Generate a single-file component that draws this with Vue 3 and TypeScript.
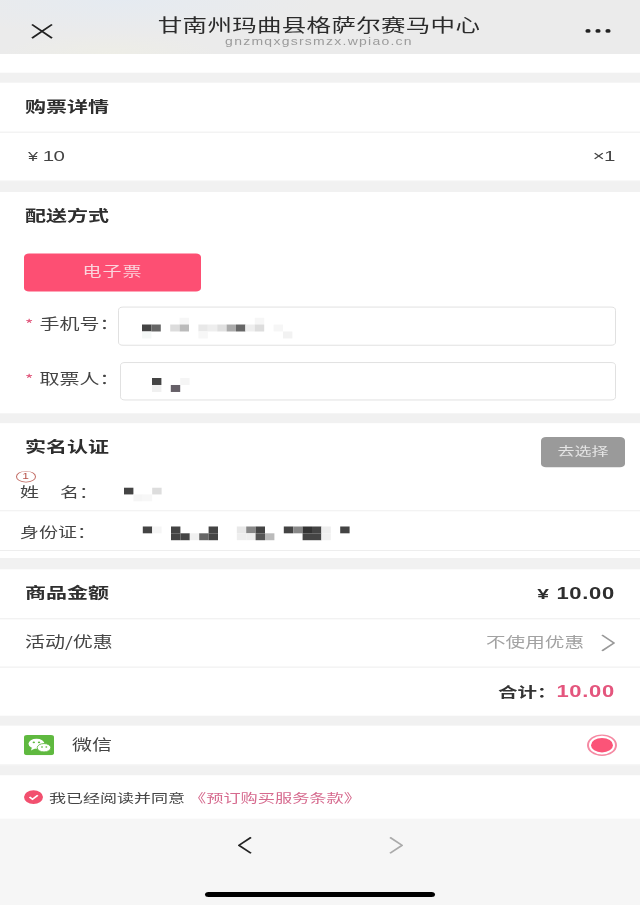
<script setup lang="ts">
type Cell = [number, number, string]

const CELL_W = 9.4
const CELL_H = 9.7

const phoneCells: Cell[] = [
  [4, 0, '#f6f6f6'], [12, 0, '#f6f6f6'],
  [0, 1, '#444'], [1, 1, '#666'], [3, 1, '#dcdcdc'], [4, 1, '#bbb'], [6, 1, '#e8e8e8'], [7, 1, '#eee'],
  [8, 1, '#e0e0e0'], [9, 1, '#aaa'], [10, 1, '#666'], [11, 1, '#eee'], [12, 1, '#ddd'], [14, 1, '#f6f6f6'],
  [0, 2, '#f5f8f7'], [6, 2, '#f7f7f7'], [15, 2, '#f2f2f2'],
]
const ticketCells: Cell[] = [
  [0, 0, '#444'], [3, 0, '#f5f5f5'],
  [0, 1, '#f0f0f0'], [2, 1, '#666068'],
]
const nameCells: Cell[] = [
  [0, 0, '#444'], [3, 0, '#ddd'],
  [1, 1, '#f5f5f5'], [2, 1, '#f7f7f7'],
]
const idCells: Cell[] = [
  [2, 0, '#444'], [3, 0, '#f5f5f5'], [5, 0, '#444'], [9, 0, '#444'],
  [5, 1, '#444'], [6, 1, '#444'], [7, 1, '#f0f0f0'], [8, 1, '#666'], [9, 1, '#444'],
  [12, 0, '#e8e8e8'], [13, 0, '#888'], [14, 0, '#444'], [12, 1, '#eee'], [13, 1, '#eee'], [14, 1, '#555'], [15, 1, '#bbb'],
  [17, 0, '#444'], [18, 0, '#888'], [19, 0, '#333'], [20, 0, '#444'], [21, 0, '#eee'],
  [19, 1, '#444'], [20, 1, '#444'], [21, 1, '#f0f0f0'], [23, 0, '#444'],
]
</script>

<template>
  <div class="viewport">
    <div class="page">
      <header class="topbar">
        <svg class="close" viewBox="0 0 22 21" width="22" height="21">
          <path d="M1 1 L21 20 M21 1 L1 20" stroke="#222" stroke-width="2.1" fill="none" />
        </svg>
        <div class="topbar-title">
          <div class="title">甘南州玛曲县格萨尔赛马中心</div>
          <div class="domain">gnzmqxgsrsmzx.wpiao.cn</div>
        </div>
        <svg class="more" viewBox="0 0 26 6" width="26" height="6">
          <circle cx="3" cy="3" r="2.6" fill="#222" />
          <circle cx="13" cy="3" r="2.6" fill="#222" />
          <circle cx="23" cy="3" r="2.6" fill="#222" />
        </svg>
      </header>

      <div class="blank"></div>
      <div class="gap"></div>

      <section class="card">
        <div class="row row-head"><span class="heading">购票详情</span></div>
        <div class="row row-ticket">
          <span class="price"><span class="yen">¥</span> 10</span>
          <span class="count">×1</span>
        </div>
      </section>
      <div class="gap gap-b"></div>

      <section class="card delivery">
        <div class="heading block-title">配送方式</div>
        <button class="ticket-btn">电子票</button>
        <div class="field field-phone">
          <span class="label"><i>*</i>手机号：</span>
          <div class="box">
            <svg width="160" height="30">
              <rect v-for="(c, i) in phoneCells" :key="i" :x="c[0] * CELL_W" :y="c[1] * CELL_H" :width="CELL_W" :height="CELL_H" :fill="c[2]" />
            </svg>
          </div>
        </div>
        <div class="field field-ticket">
          <span class="label"><i>*</i>取票人：</span>
          <div class="box">
            <svg width="60" height="20">
              <rect v-for="(c, i) in ticketCells" :key="i" :x="c[0] * CELL_W" :y="c[1] * CELL_H" :width="CELL_W" :height="CELL_H" :fill="c[2]" />
            </svg>
          </div>
        </div>
      </section>
      <div class="gap"></div>

      <section class="card realname">
        <div class="real-head">
          <div class="heading block-title">实名认证</div>
          <button class="choose-btn">去选择</button>
        </div>
        <div class="person person-name">
          <span class="badge">1</span>
          <span class="person-label">姓<em></em>名：</span>
          <svg width="60" height="20">
            <rect v-for="(c, i) in nameCells" :key="i" :x="c[0] * CELL_W" :y="c[1] * CELL_H" :width="CELL_W" :height="CELL_H" :fill="c[2]" />
          </svg>
        </div>
        <div class="person person-id">
          <span class="person-label">身份证：</span>
          <svg width="240" height="20">
            <rect v-for="(c, i) in idCells" :key="i" :x="c[0] * CELL_W" :y="c[1] * CELL_H" :width="CELL_W" :height="CELL_H" :fill="c[2]" />
          </svg>
        </div>
      </section>
      <div class="gap gap-c"></div>

      <section class="card">
        <div class="row row-head">
          <span class="heading">商品金额</span>
          <span class="amount"><span class="yen-b">¥</span> 10.00</span>
        </div>
        <div class="row row-promo">
          <span class="plain">活动/优惠</span>
          <span class="promo">
            <span class="promo-text">不使用优惠</span>
            <svg viewBox="0 0 14 24" width="14" height="24">
              <path d="M1 1 L13 12 L1 23" stroke="#999" stroke-width="2" fill="none" />
            </svg>
          </span>
        </div>
        <div class="row row-total">
          <span class="total"><span class="total-label">合计：</span><span class="total-value">10.00</span></span>
        </div>
      </section>
      <div class="gap"></div>

      <section class="card pay">
        <div class="pay-left">
          <svg class="wechat" viewBox="0 0 30 28" width="30" height="28">
            <rect width="30" height="28" rx="3" fill="#5fb93f" />
            <ellipse cx="12.5" cy="12" rx="8" ry="7" fill="#fff" />
            <path d="M8 17 L7 21.5 L12 18 Z" fill="#fff" />
            <ellipse cx="20" cy="17.5" rx="6.8" ry="5.8" fill="#fff" stroke="#5fb93f" stroke-width="1" />
            <circle cx="9.8" cy="10" r="1.2" fill="#5fb93f" />
            <circle cx="15" cy="10" r="1.2" fill="#5fb93f" />
            <circle cx="18" cy="16.4" r="1" fill="#5fb93f" />
            <circle cx="22.3" cy="16.4" r="1" fill="#5fb93f" />
          </svg>
          <span class="plain">微信</span>
        </div>
        <span class="radio"><span class="radio-dot"></span></span>
      </section>
      <div class="gap"></div>

      <section class="card agree">
        <svg class="check" viewBox="0 0 19 20" width="19" height="20">
          <circle cx="9.5" cy="10" r="9.5" fill="#f2506f" />
          <path d="M5.5 10 L8.5 13 L13.8 7.6" stroke="#fff" stroke-width="2" fill="none" />
        </svg>
        <span class="agree-text">我已经阅读并同意</span>
        <span class="agree-link">《预订购买服务条款》</span>
      </section>

      <footer class="bottom">
        <nav class="nav">
          <svg viewBox="0 0 14 24" width="14" height="24">
            <path d="M13 1 L1 12 L13 23" stroke="#222" stroke-width="2.1" fill="none" />
          </svg>
          <svg viewBox="0 0 14 24" width="14" height="24">
            <path d="M1 1 L13 12 L1 23" stroke="#aaa" stroke-width="2.1" fill="none" />
          </svg>
        </nav>
        <div class="home-bar"></div>
      </footer>
    </div>
  </div>
</template>

<style scoped>
.viewport {
  width: 640px;
  height: 905px;
  overflow: hidden;
}
.page {
  width: 640px;
  height: 1257px;
  transform: scaleY(0.72);
  transform-origin: top left;
  filter: blur(0.45px);
  display: flex;
  flex-direction: column;
  background: #fff;
  color: #333;
  font-family: "Noto Sans CJK SC", "Liberation Sans", sans-serif;
}
.topbar {
  height: 75px;
  flex: none;
  display: flex;
  align-items: center;
  justify-content: space-between;
  padding: 0 29px 0 31px;
  background:
    radial-gradient(ellipse 200px 50px at 120px 0, rgba(224, 234, 246, 0.55), transparent),
    radial-gradient(ellipse 110px 28px at 110px 75px, rgba(240, 240, 226, 0.5), transparent),
    #ebebeb;
}
.close { margin-top: 12px; }
.more { margin-top: 10px; }
.topbar-title {
  text-align: center;
  margin-top: 11px;
}
.title {
  font-size: 24.5px;
  letter-spacing: 0.3px;
  line-height: 30px;
  color: #2b2b2b;
}
.domain {
  font-family: "Liberation Sans", sans-serif;
  font-size: 14px;
  letter-spacing: 1.25px;
  line-height: 17px;
  color: #9b9b9b;
}
.blank { height: 26px; flex: none; background: #fff; }
.gap { height: 14px; flex: none; background: #f1f1f1; }
.gap-b { height: 15px; }
.gap-c { height: 16.7px; }
.card { background: #fff; flex: none; }
.row {
  display: flex;
  align-items: center;
  justify-content: space-between;
  padding: 0 25px;
  box-sizing: border-box;
}
.row-head { height: 69px; border-bottom: 1.5px solid #e6e6e6; }
.row-ticket { height: 68px; border-bottom: 1.5px solid #e6e6e6; padding-bottom: 3px; }
.row-promo { height: 67px; border-bottom: 1.5px solid #e6e6e6; }
.row-total { height: 67px; justify-content: flex-end; }
.heading {
  font-size: 21px;
  font-weight: 700;
  color: #2e2e2e;
}
.row-head .heading { margin-bottom: 6px; }
.price, .count {
  font-family: "Liberation Sans", sans-serif;
  font-size: 20.5px;
  letter-spacing: -0.5px;
  color: #444;
}
.price { margin-left: 3px; }
.yen { font-size: 18px; }
.delivery { height: 307px; box-sizing: border-box; }
.block-title { line-height: 63px; padding-left: 25px; }
.ticket-btn {
  display: block;
  margin: 22px 0 0 24px;
  width: 177px;
  height: 53px;
  border: none;
  border-radius: 5px;
  background: #fd4f73;
  color: #fbd3dc;
  font-family: inherit;
  font-size: 19px;
  letter-spacing: 1px;
  padding: 0 0 7px;
}
.field {
  display: flex;
  align-items: center;
  padding: 0 24px 0 25px;
  height: 54px;
}
.field-phone { margin-top: 21px; }
.field-ticket { margin-top: 23px; height: 53px; }
.label {
  flex: none;
  width: 93px;
  font-size: 20px;
  color: #444;
  white-space: nowrap;
  margin-bottom: 10px;
}
.field-ticket .label { width: 94.5px; }
.label i {
  font-style: normal;
  color: #e0557a;
  display: inline-block;
  width: 14.5px;
  font-size: 18px;
}
.box {
  flex: 1;
  height: 100%;
  box-sizing: border-box;
  border: 1.5px solid #dcdcdc;
  border-radius: 5px;
  display: flex;
  align-items: center;
  background: #fff;
}
.field-phone .box { padding: 6px 0 0 23px; }
.field-ticket .box { padding: 11px 0 0 31px; }
.realname { height: 186.5px; box-sizing: border-box; }
.real-head {
  height: 65px;
  display: flex;
  justify-content: space-between;
  align-items: flex-start;
  padding-right: 15px;
}
.choose-btn {
  margin-top: 19px;
  width: 84px;
  height: 42px;
  border: none;
  border-radius: 5px;
  background: #9a9a9a;
  color: #e4e4e4;
  font-family: inherit;
  font-size: 17px;
  padding: 0 0 3px;
}
.person {
  position: relative;
  display: flex;
  align-items: center;
  border-bottom: 1.5px solid #e8e8e8;
  padding-left: 20px;
  box-sizing: border-box;
}
.person-name { height: 57px; padding-top: 4px; }
.person-id { height: 55px; }
.person-label {
  flex: none;
  width: 103.7px;
  font-size: 19px;
  line-height: 22px;
  color: #444;
  white-space: nowrap;
}
.person-name .person-label { margin-bottom: 2px; }
.person-id .person-label { margin-top: 2px; }
.person-label em {
  display: inline-block;
  width: 21px;
}
.person svg { flex: none; margin-top: 8px; }
.badge {
  position: absolute;
  left: 15.5px;
  top: 1px;
  width: 20px;
  height: 16px;
  box-sizing: border-box;
  border: 1.3px solid #c0675f;
  border-radius: 50%;
  font-family: "Liberation Sans", sans-serif;
  font-size: 12px;
  line-height: 13px;
  text-align: center;
  color: #b8554c;
}
.amount {
  font-family: "Liberation Sans", sans-serif;
  font-size: 22px;
  font-weight: 700;
  letter-spacing: 0.7px;
  color: #2e2e2e;
}
.yen-b { font-size: 21px; }
.plain {
  font-size: 20px;
  color: #444;
}
.row-promo .plain { margin-bottom: 5px; }
.pay-left .plain { margin-bottom: 3px; }
.promo {
  display: flex;
  align-items: center;
  gap: 17px;
  font-size: 19.6px;
  color: #a2a2a2;
}
.promo-text { margin-bottom: 5px; }
.total { display: flex; align-items: center; }
.total-label {
  font-size: 19.5px;
  font-weight: 700;
  color: #333;
  margin-bottom: 3px;
}
.total-value {
  font-family: "Liberation Sans", sans-serif;
  font-size: 22px;
  font-weight: 700;
  letter-spacing: 0.7px;
  color: #e4557d;
}
.pay {
  height: 55px;
  box-sizing: border-box;
  display: flex;
  align-items: center;
  justify-content: space-between;
  padding: 0 23.5px 0 24px;
  border-bottom: 1.5px solid #e6e6e6;
}
.pay-left { display: flex; align-items: center; gap: 18px; }
.radio {
  width: 30px;
  height: 30px;
  box-sizing: border-box;
  border: 2px solid #f58aa3;
  border-radius: 50%;
  display: flex;
  align-items: center;
  justify-content: center;
}
.radio-dot {
  width: 22px;
  height: 20px;
  border-radius: 50%;
  background: #fb5478;
}
.agree {
  height: 60px;
  display: flex;
  align-items: center;
  padding-left: 24px;
}
.agree-text {
  margin-left: 6px;
  font-size: 17px;
  color: #444;
}
.agree-link {
  margin-left: 4px;
  font-size: 17.2px;
  color: #d66a8e;
}
.bottom {
  flex: 1;
  background: #f6f6f6;
  display: flex;
  flex-direction: column;
  justify-content: space-between;
  padding-bottom: 11px;
  box-sizing: border-box;
}
.nav {
  display: flex;
  justify-content: center;
  gap: 137px;
  padding-top: 25px;
}
.home-bar {
  width: 230px;
  height: 7px;
  margin: 0 auto;
  border-radius: 4px;
  background: #000;
}
</style>

<style>
html, body {
  margin: 0;
  height: 905px;
  overflow: hidden;
  background: #fff;
}
</style>
